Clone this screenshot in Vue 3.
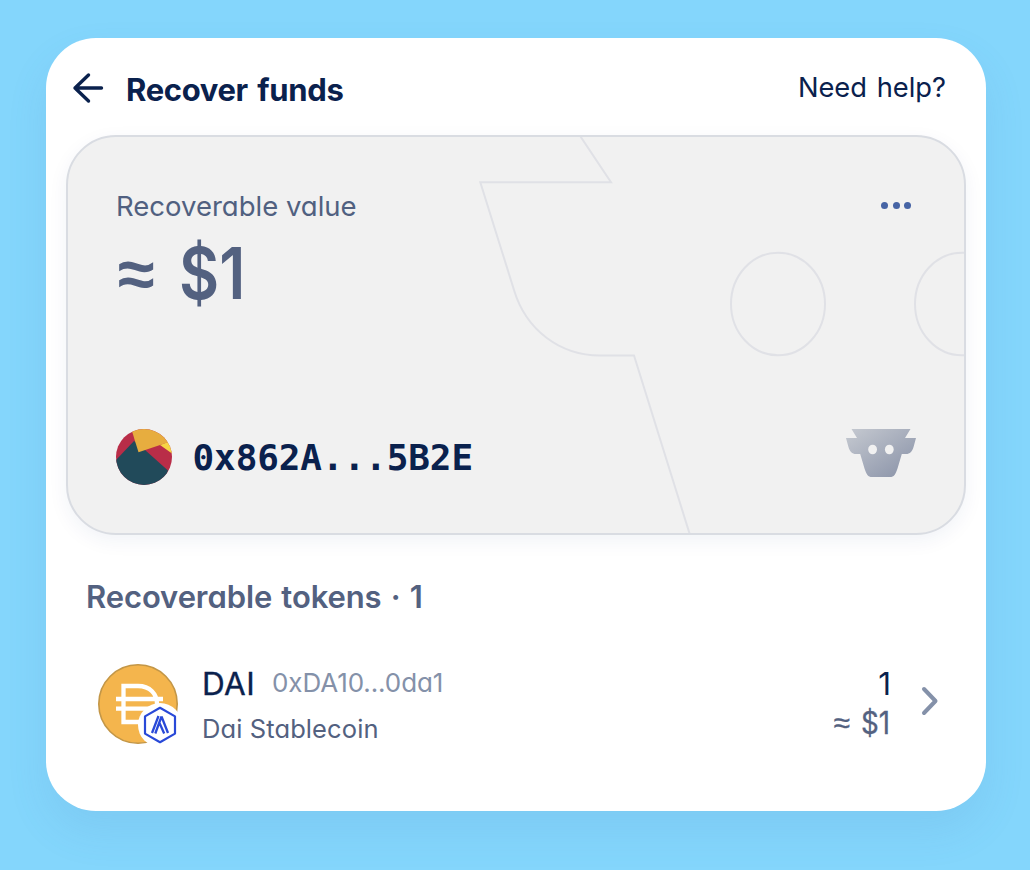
<script setup>
const dots = [0, 1, 2]
</script>

<template>
  <main class="page">
    <section class="panel">
      <header class="top">
        <svg class="back" width="32" height="32" viewBox="0 0 32 32"><path d="M16.500 3 3 16l13.500 13M3 16h26.500" /></svg>
        <h1>Recover funds</h1>
        <a class="help">Need help?</a>
      </header>

      <article class="card">
        <svg class="outline" width="896" height="396" viewBox="68 137 896 396">
          <path d="M579.500 135 611 182.3H480.3L514 290C526 330 560 355.5 600 355.5H634L690 535" />
          <ellipse cx="778" cy="304" rx="47" ry="51.3" />
          <ellipse cx="962" cy="304" rx="47" ry="51.3" />
        </svg>
        <div class="row first">
          <div>
            <div class="label">Recoverable value</div>
            <div class="value"><span class="approx">≈</span><span class="money">$1</span></div>
          </div>
          <div class="dots"><i v-for="d in dots" :key="d"></i></div>
        </div>
        <div class="row last">
          <svg class="avatar" width="56" height="56" viewBox="0 0 56 56">
            <defs><clipPath id="round"><circle cx="28" cy="28" r="28" /></clipPath></defs>
            <g clip-path="url(#round)">
              <path fill="#b92d48" d="M0 0h56v56H0z" />
              <path fill="#214a5a" d="M-2 33 18 12 29 21 52 41.5 46 58H-2z" />
              <path fill="#f6d444" d="m44 16 8-3 6 1v12z" />
              <path fill="#e7ad3f" d="M15-1 22.500 23.300 53 13 46-2z" />
            </g>
          </svg>
          <span class="address">0x862A...5B2E</span>
          <svg class="cow" width="70" height="48" viewBox="846 429 70 48">
            <defs><linearGradient id="cowfill" x1="0" y1="0" x2="1" y2="1"><stop offset="0" stop-color="#c6cad1" /><stop offset="1" stop-color="#8790a6" /></linearGradient></defs>
            <path fill="url(#cowfill)" d="M851.500 429h59l-5.500 9h11l-2.300 8.500c-1.700 5.500-3.700 7.500-7.700 7.500h-4.200l-4.300 14.500c-1.900 6-3.500 8.500-7.500 8.500h-18c-4 0-5.600-2.500-7.500-8.500L860.200 454H856c-4 0-6-2-7.700-7.500L846 438h11z" />
            <ellipse cx="872.600" cy="449.500" rx="4.400" ry="4.800" fill="#f1f1f1" />
            <ellipse cx="889.300" cy="449.500" rx="4.400" ry="4.800" fill="#f1f1f1" />
          </svg>
        </div>
      </article>

      <h2>Recoverable tokens · <span class="count">1</span></h2>

      <div class="token">
        <div class="coin">
          <svg width="80" height="80" viewBox="0 0 80 80">
            <circle cx="40" cy="40" r="39.200" fill="#f4b54d" stroke="#c39646" stroke-width="1.600" />
            <path d="M25.500 22H40c12 0 19 8 19 18s-7 18-19 18H25.500zM18 35h47M18 44.700h47" fill="none" stroke="#fff" stroke-width="4.300" />
          </svg>
          <svg class="chain" width="44" height="44" viewBox="0 0 44 44">
            <circle cx="22" cy="22" r="22" fill="#fff" />
            <path d="m22 4.800 15 8.600v17.200L22 39.200 7 30.600V13.400z" fill="#fff" stroke="#2949d8" stroke-width="2.200" stroke-linejoin="round" />
            <path d="m14 30 6.500-17M17.300 30.500l6.200-17M23.500 13.500 30 30M21.500 20l4.700 10.500" fill="none" stroke="#2949d8" stroke-width="2.300" />
          </svg>
        </div>
        <div class="names">
          <div class="line"><span class="symbol">DAI</span><span class="contract">0xDA10...0da1</span></div>
          <div class="sub">Dai Stablecoin</div>
        </div>
        <div class="amounts">
          <div class="amount">1</div>
          <div class="fiat"><span class="approx2">≈</span><span class="money2">$1</span></div>
        </div>
        <svg class="chevron" width="20" height="32" viewBox="0 0 20 32"><path d="m4 4 11.500 12L4 28" /></svg>
      </div>
    </section>
  </main>
</template>

<style>
body { background: #84d6fc; }
</style>

<style scoped>
* { box-sizing: border-box; }
.page { width: 1030px; height: 870px; overflow: hidden; padding: 38px 44px 0 46px; background: #84d6fc; font-family: Inter, "Open Sans", sans-serif; font-feature-settings: "cv11" 1; color: #0a214d; }
.panel { height: 773px; padding: 0 20px; border-radius: 50px; background: #fff; box-shadow: 0 20px 40px rgba(70, 125, 185, .12); }
.top { height: 97px; display: flex; padding: 0 20px 0 6px; }
.back { margin-top: 34px; fill: none; stroke: #0a214d; stroke-width: 3.400; stroke-linecap: round; stroke-linejoin: round; }
h1, h2 { margin: 0; white-space: nowrap; }
h1 { margin: 32px 0 0 22px; font-size: 31px; line-height: 40px; font-weight: 650; letter-spacing: -.35px; word-spacing: 2.500px; }
.help { margin: 30px 0 0 auto; font-size: 27.300px; line-height: 40px; white-space: nowrap; word-spacing: 2px; }
.card { position: relative; width: 900px; height: 400px; border: 2px solid #d9dce2; border-radius: 50px; background: #f1f1f1; overflow: hidden; box-shadow: 0 6px 20px rgba(20, 50, 120, .06); padding: 50px 48px 48px; display: flex; flex-direction: column; justify-content: space-between; }
.outline { position: absolute; left: 0; top: 0; fill: none; stroke: #e0e1e6; stroke-width: 2; }
.row { position: relative; display: flex; }
.first { justify-content: space-between; }
.label { font-size: 27.500px; line-height: 38px; color: #506080; }
.value { display: flex; color: #536180; font-size: 71px; line-height: 96px; font-weight: 600; white-space: pre; }
.approx { font: bold 67px/97px "Liberation Sans", sans-serif; width: 61px; margin-left: 2px; }
.money { transform: scaleX(.87); transform-origin: 0 0; }
.dots { display: flex; gap: 4.500px; padding: 15px 5px 0 0; }
.dots i { width: 7px; height: 7px; border-radius: 50%; background: #4664a5; }
.last { align-items: center; }
.address { margin-left: 20.500px; font: bold 36px/56px "DejaVu Sans Mono", monospace; letter-spacing: -.1px; transform: translateY(1px); }
.cow { margin-left: auto; margin-top: -8px; }
h2 { margin: 42px 0 0 20px; font-size: 31px; line-height: 40px; font-weight: 600; color: #536180; letter-spacing: -.1px; word-spacing: 1.500px; }
.token { display: flex; height: 80px; margin: 47px 0 0 32px; }
.coin { position: relative; width: 80px; height: 80px; }
.chain { position: absolute; left: 40px; top: 39px; }
.names { margin-left: 24px; white-space: nowrap; }
.line { height: 40px; line-height: 40px; font-size: 31.500px; display: flex; }
.symbol { letter-spacing: .4px; -webkit-text-stroke: .35px currentColor; }
.contract { margin-left: 17px; font-size: 26px; line-height: 38px; color: #8491a9; letter-spacing: -.1px; }
.sub { margin-top: 6px; line-height: 38px; font-size: 25.500px; color: #536180; letter-spacing: .1px; }
.amounts { margin-left: auto; text-align: right; font-size: 31.500px; line-height: 40px; }
.amount { height: 39px; }
.fiat { color: #536180; display: flex; justify-content: flex-end; line-height: 40px; transform: translateX(-1px); -webkit-text-stroke: .3px currentColor; }
.approx2 { font: 30px/40px "Liberation Sans", sans-serif; margin-right: 10px; }
.money2 { transform: scaleX(.88); transform-origin: 100% 0; margin-left: -3px; }
.chevron { margin: 21px 26px 0 29px; fill: none; stroke: #8491a9; stroke-width: 4; stroke-linecap: round; stroke-linejoin: round; }
</style>
